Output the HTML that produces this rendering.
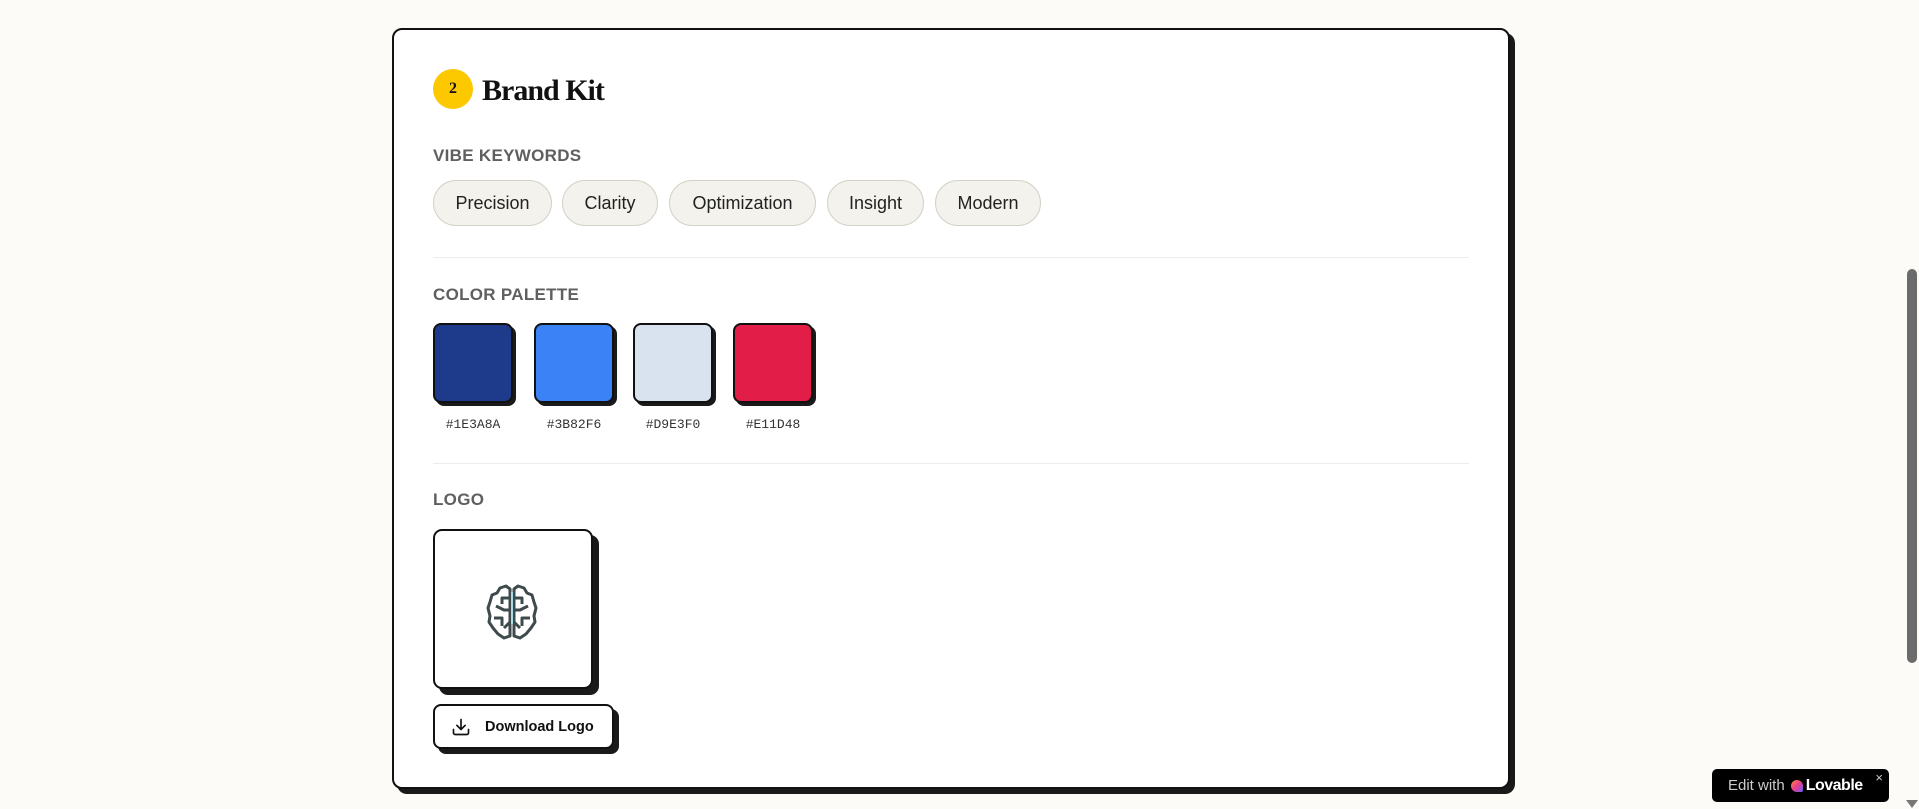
<!DOCTYPE html>
<html><head><meta charset="utf-8"><style>
*{box-sizing:border-box;margin:0;padding:0}
body{width:1919px;height:809px;background:#fcfbf7;font-family:"Liberation Sans",sans-serif;position:relative;overflow:hidden;color:#111}
.card{position:absolute;left:392px;top:28px;width:1118px;height:761px;background:#fff;border:2px solid #111;border-radius:10px;box-shadow:5px 5px 0 #1a1a1a}
.abs{position:absolute}
.badge{left:433px;top:69px;width:40px;height:40px;border-radius:50%;background:#fcc800;font:bold 16px "Liberation Serif",serif;display:flex;align-items:center;justify-content:center}
.title{left:482px;top:74px;font:bold 30px "Liberation Serif",serif;letter-spacing:-1px}
.lbl{left:433px;font-size:17px;color:#5f5f5f;letter-spacing:.3px;font-weight:600}
.pill{top:180px;height:46px;border:1px solid #d4d2c8;background:#f3f2ec;border-radius:23px;font-size:18px;display:flex;align-items:center;justify-content:center;color:#222}
.hr{left:433px;width:1036px;height:1px;background:#eeece6}
.sw{top:323px;width:80px;height:80px;border:2px solid #111;border-radius:8px;box-shadow:3px 3px 0 #1a1a1a}
.hex{top:417px;width:80px;text-align:center;font:13px "Liberation Mono",monospace;color:#333}
</style></head><body>
<div class="card"></div>
<div class="abs badge">2</div>
<div class="abs title">Brand Kit</div>
<div class="abs lbl" style="top:146px">VIBE KEYWORDS</div>
<div class="abs pill" style="left:433px;width:119px">Precision</div>
<div class="abs pill" style="left:562px;width:96px">Clarity</div>
<div class="abs pill" style="left:669px;width:147px">Optimization</div>
<div class="abs pill" style="left:827px;width:97px">Insight</div>
<div class="abs pill" style="left:935px;width:106px">Modern</div>
<div class="abs hr" style="top:257px"></div>
<div class="abs lbl" style="top:285px">COLOR PALETTE</div>
<div class="abs sw" style="left:433px;background:#1e3a8a"></div>
<div class="abs sw" style="left:534px;background:#3b82f6"></div>
<div class="abs sw" style="left:633px;background:#d9e3f0"></div>
<div class="abs sw" style="left:733px;background:#e11d48"></div>
<div class="abs hex" style="left:433px">#1E3A8A</div>
<div class="abs hex" style="left:534px">#3B82F6</div>
<div class="abs hex" style="left:633px">#D9E3F0</div>
<div class="abs hex" style="left:733px">#E11D48</div>
<div class="abs hr" style="top:463px"></div>
<div class="abs lbl" style="top:490px">LOGO</div>
<div class="abs" style="left:433px;top:529px;width:160px;height:160px;border:2px solid #111;border-radius:9px;box-shadow:6px 6px 0 #1a1a1a;background:#fff"></div>
<svg class="abs" style="left:486px;top:584px" width="52" height="56" viewBox="0 0 52 56" fill="none" stroke="#3f4a4c" stroke-width="3" stroke-linejoin="round">
<path d="M24 5 L20 2 L14 4 L11 9 L6 11 L4 18 L2 24 L4 32 L3 38 L7 44 L12 50 L18 54 L24 52 Z"/>
<path d="M28 5 L32 2 L38 4 L41 9 L46 11 L48 18 L50 24 L48 32 L49 38 L45 44 L40 50 L34 54 L28 52 Z"/>
<path d="M24 14 L16 14 L16 20 M10 22 L18 26 L24 26 M8 34 L16 34 L16 42 M24 38 L18 44 M28 14 L36 14 L36 20 M42 22 L34 26 L28 26 M44 34 L36 34 L36 42 M28 38 L34 44"/>
<path d="M25 8 L27 8 L27 40 L25 40 Z" fill="#a8dce8" stroke="none"/>
</svg>
<div class="abs" style="left:433px;top:704px;width:181px;height:45px;border:2px solid #111;border-radius:8px;box-shadow:5px 5px 0 #1a1a1a;background:#fff;display:flex;align-items:center;font-weight:bold;font-size:14.5px">
<svg style="margin:0 14px 0 16px" width="20" height="20" viewBox="0 0 24 24" fill="none" stroke="#111" stroke-width="2" stroke-linecap="round" stroke-linejoin="round"><path d="M21 15v4a2 2 0 0 1-2 2H5a2 2 0 0 1-2-2v-4M7 10l5 5 5-5M12 15V3"/></svg>Download Logo</div>
<div class="abs" style="left:1906px;top:0;width:13px;height:809px;background:#fcfbf7"></div>
<div class="abs" style="left:1907px;top:269px;width:10px;height:394px;border-radius:5px;background:#6b6b6b"></div>
<div class="abs" style="left:1906px;top:800px;width:0;height:0;border-left:6px solid transparent;border-right:6px solid transparent;border-top:8px solid #777"></div>
<div class="abs" style="left:1712px;top:769px;width:177px;height:33px;background:#000;border-radius:5px;color:#fff;font-size:15px;display:flex;align-items:center;padding-left:16px">
<span style="color:#ccc">Edit with</span>
<span style="display:inline-block;width:12px;height:12px;margin:0 3px 0 6px;border-radius:6px 6px 2px 6px;background:linear-gradient(135deg,#ff8a3c,#e83e8c,#6a5cff)"></span>
<b style="font-size:16px;letter-spacing:-.5px">Lovable</b>
<span style="position:absolute;right:6px;top:1px;font-size:13px;color:#ccc">×</span></div>
</body></html>
